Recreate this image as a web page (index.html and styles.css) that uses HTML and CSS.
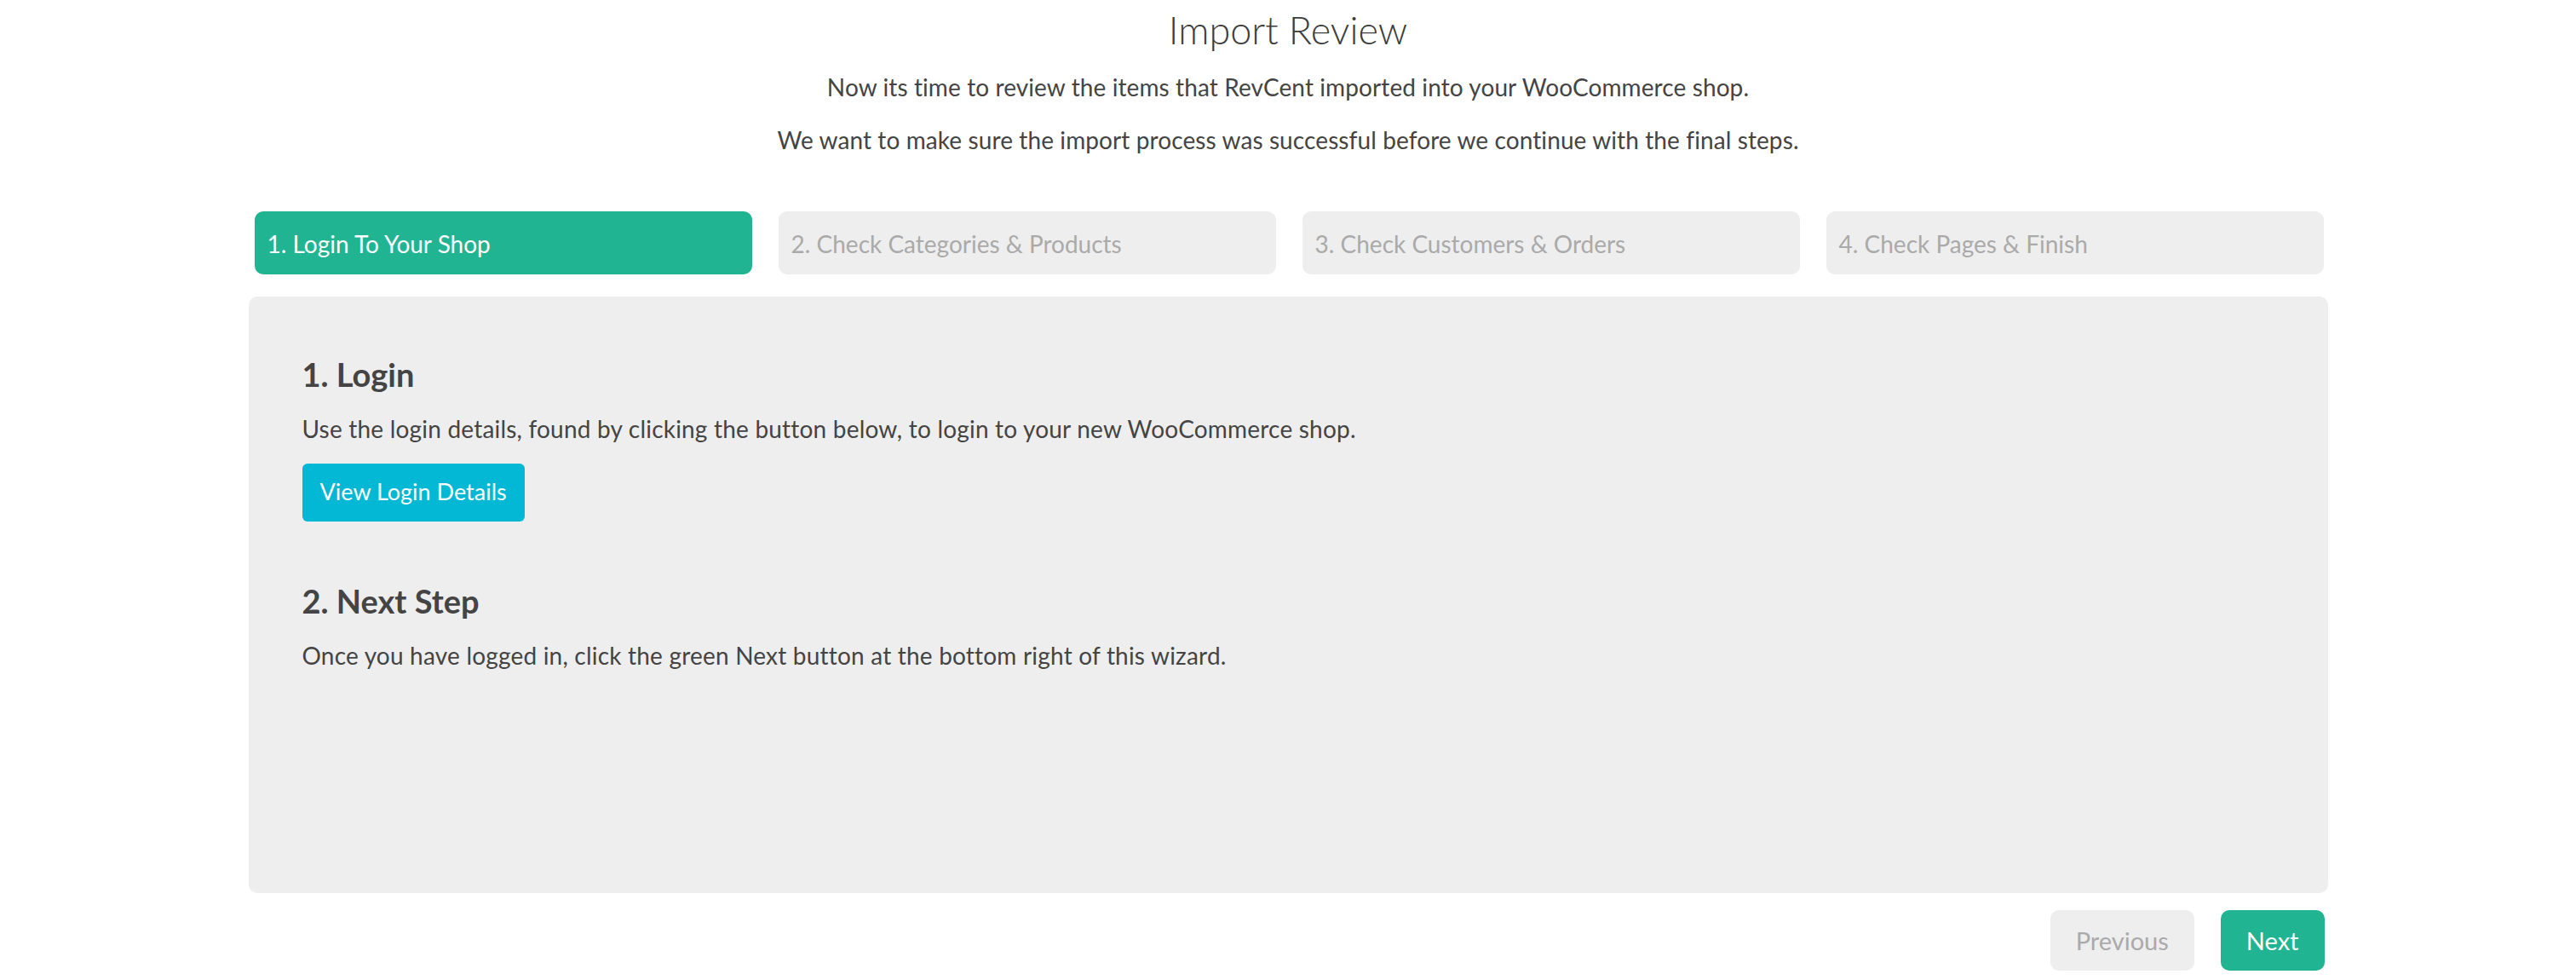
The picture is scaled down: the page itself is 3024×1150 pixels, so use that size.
FILE: index.html
```html
<!DOCTYPE html>
<html lang="en">
<head>
    <meta charset="UTF-8">
    <title>Import Review</title>
    <link rel="stylesheet" href="styles.css">
</head>
<body>
    <div class="intro">
        <h1>Import Review</h1>
        <p>Now its time to review the items that RevCent imported into your WooCommerce shop.</p>
        <p>We want to make sure the import process was successful before we continue with the final steps.</p>
    </div>

    <div class="wizard">
        <ul class="steps">
            <li class="current"><a href="#">1. Login To Your Shop</a></li>
            <li class="disabled"><a href="#">2. Check Categories &amp; Products</a></li>
            <li class="disabled"><a href="#">3. Check Customers &amp; Orders</a></li>
            <li class="disabled"><a href="#">4. Check Pages &amp; Finish</a></li>
        </ul>

        <div class="content">
            <section class="step-part">
                <h3>1. Login</h3>
                <p>Use the login details, found by clicking the button below, to login to your new WooCommerce shop.</p>
                <button class="info-button">View Login Details</button>
            </section>
            <section class="step-part">
                <h3>2. Next Step</h3>
                <p>Once you have logged in, click the green Next button at the bottom right of this wizard.</p>
            </section>
        </div>

        <ul class="actions">
            <li class="disabled"><a href="#">Previous</a></li>
            <li><a href="#">Next</a></li>
        </ul>
    </div>
</body>
</html>
```

FILE: styles.css
```css
:root {
    --text-color: #444444;
    --green: #20b492;
    --cyan: #02b8d4;
    --grey-bg: #eeeeee;
    --grey-text: #aaaaaa;
}
* {
    box-sizing: border-box;
    margin: 0;
    padding: 0;
}
body {
    background-color: #ffffff;
    font-family: 'Lato', 'Open Sans', sans-serif;
    color: var(--text-color);
}
a {
    text-decoration: none;
}
ul {
    list-style: none;
}

/* header text */
.intro {
    text-align: center;
    padding-top: 8px;
}
.intro h1 {
    font-size: 45px;
    font-weight: 300;
    line-height: 54px;
    color: #3d3d3d;
    margin-bottom: 20px;
}
.intro p {
    font-size: 28px;
    line-height: 40px;
    letter-spacing: 0.1px;
    margin-bottom: 22px;
}

/* wizard */
.wizard {
    width: 2441px;
    margin: 64px auto 0;
}
.steps {
    display: grid;
    grid-template-columns: repeat(4, 1fr);
    gap: 31px;
    padding: 0 5px 0 7px;
}
.steps a {
    display: block;
    padding: 18px 15px 16px;
    font-size: 28px;
    line-height: 40px;
    border-radius: 10px;
}
.steps .current a {
    background-color: var(--green);
    color: #ffffff;
}
.steps .disabled a {
    background-color: var(--grey-bg);
    color: var(--grey-text);
    cursor: default;
}

.content {
    background-color: var(--grey-bg);
    border-radius: 10px;
    height: 700px;
    margin-top: 26px;
    padding: 68px 63px;
}
.step-part + .step-part {
    margin-top: 70px;
}
.step-part h3 {
    font-size: 38px;
    font-weight: 700;
    line-height: 46px;
    margin-bottom: 21px;
}
.step-part p {
    font-size: 28px;
    line-height: 40px;
    letter-spacing: 0.2px;
    margin-bottom: 21px;
}
.info-button {
    background-color: var(--cyan);
    color: #ffffff;
    border: none;
    border-radius: 6px;
    font-family: inherit;
    font-size: 27px;
    line-height: 40px;
    padding: 13px 21px 15px;
    cursor: pointer;
}

.actions {
    display: flex;
    justify-content: flex-end;
    gap: 31px;
    margin-top: 20px;
    padding-right: 4px;
}
.actions a {
    display: block;
    height: 71px;
    line-height: 71px;
    padding: 0 30px;
    font-size: 29px;
    border-radius: 10px;
    background-color: var(--green);
    color: #ffffff;
}
.actions .disabled a {
    background-color: var(--grey-bg);
    color: var(--grey-text);
    cursor: default;
}
```
